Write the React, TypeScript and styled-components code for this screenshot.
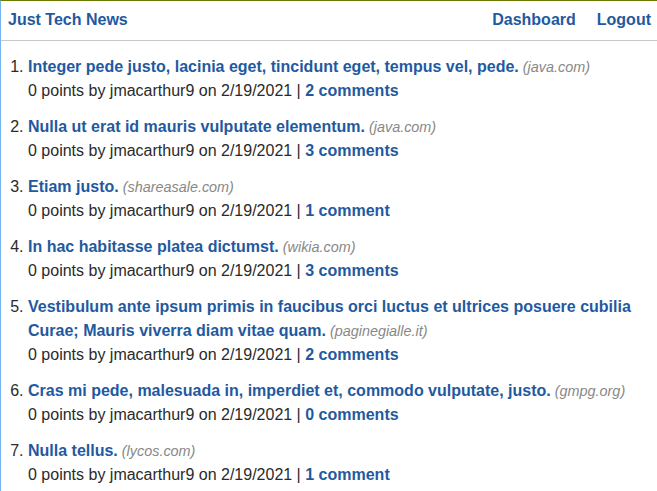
import React from "react";
import styled, { createGlobalStyle } from "styled-components";

const Global = createGlobalStyle`
  html, body { margin: 0; padding: 0; background: #fff; }
  body { font-family: "Liberation Sans", Arial, sans-serif; font-size: 16px; color: #333; }
  * { box-sizing: border-box; }
`;

const Page = styled.div`
  min-height: 491px;
  border-top: 1px solid #6b7c00;
  border-left: 1px solid #74b4f0;
`;

const Header = styled.header`
  display: flex;
  justify-content: space-between;
  align-items: center;
  height: 40px;
  padding: 0 6px 1px 7px;
  border-bottom: 1px solid #c8c8c8;
`;

const Link = styled.a`
  color: #1f5aa0;
  font-weight: bold;
  text-decoration: none;
`;

const Nav = styled.nav`
  display: flex;
  gap: 21px;
`;

const List = styled.ol`
  margin: 0;
  padding: 14px 0 0 27px;
  list-style: decimal;
`;

const Item = styled.li`
  line-height: 24px;
  margin-bottom: 12px;
  color: #2a2a2a;
`;

const Domain = styled.span`
  font-style: italic;
  font-size: 0.9em;
  color: #888;
  margin-left: 4px;
`;

const Meta = styled.div`
  color: #2a2a2a;
`;

const posts = [
  { t: "Integer pede justo, lacinia eget, tincidunt eget, tempus vel, pede.", d: "java.com", c: 2 },
  { t: "Nulla ut erat id mauris vulputate elementum.", d: "java.com", c: 3 },
  { t: "Etiam justo.", d: "shareasale.com", c: 1 },
  { t: "In hac habitasse platea dictumst.", d: "wikia.com", c: 3 },
  { t: "Vestibulum ante ipsum primis in faucibus orci luctus et ultrices posuere cubilia Curae; Mauris viverra diam vitae quam.", d: "paginegialle.it", c: 2 },
  { t: "Cras mi pede, malesuada in, imperdiet et, commodo vulputate, justo.", d: "gmpg.org", c: 0 },
  { t: "Nulla tellus.", d: "lycos.com", c: 1 },
];

export default function App() {
  return (
    <Page>
      <Global />
      <Header>
        <Link href="#">Just Tech News</Link>
        <Nav>
          <Link href="#">Dashboard</Link>
          <Link href="#">Logout</Link>
        </Nav>
      </Header>
      <List>
        {posts.map((p, i) => (
          <Item key={i}>
            <Link href="#">{p.t}</Link>
            <Domain>({p.d})</Domain>
            <Meta>
              0 points by jmacarthur9 on 2/19/2021 |{" "}
              <Link href="#">{p.c} {p.c === 1 ? "comment" : "comments"}</Link>
            </Meta>
          </Item>
        ))}
      </List>
    </Page>
  );
}
